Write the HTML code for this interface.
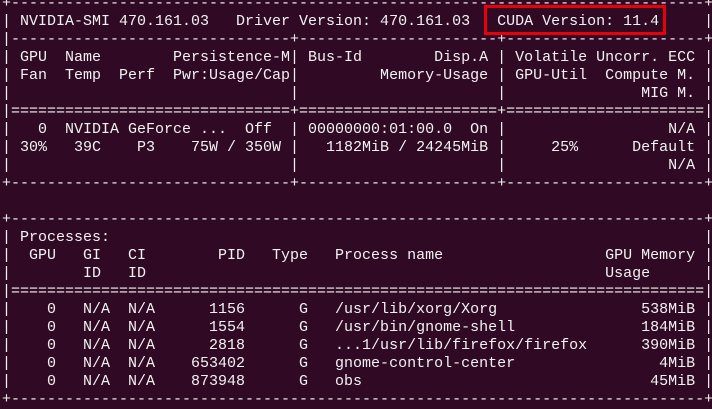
<!DOCTYPE html>
<html><head><meta charset="utf-8"><style>
html,body{margin:0;padding:0;background:#300a24;width:712px;height:404px;overflow:hidden}
pre{position:absolute;left:2px;top:-5px;margin:0;font-family:"Liberation Mono",monospace;font-size:15px;line-height:18px;color:#f2f2f2;white-space:pre}
.box{position:absolute;left:484px;top:5px;width:176px;height:24px;border:3px solid #e8000b}
</style></head><body>
<pre>+-----------------------------------------------------------------------------+
| NVIDIA-SMI 470.161.03   Driver Version: 470.161.03   CUDA Version: 11.4     |
|-------------------------------+----------------------+----------------------+
| GPU  Name        Persistence-M| Bus-Id        Disp.A | Volatile Uncorr. ECC |
| Fan  Temp  Perf  Pwr:Usage/Cap|         Memory-Usage | GPU-Util  Compute M. |
|                               |                      |               MIG M. |
|===============================+======================+======================|
|   0  NVIDIA GeForce ...  Off  | 00000000:01:00.0  On |                  N/A |
| 30%   39C    P3    75W / 350W |   1182MiB / 24245MiB |     25%      Default |
|                               |                      |                  N/A |
+-------------------------------+----------------------+----------------------+
                                                                               
+-----------------------------------------------------------------------------+
| Processes:                                                                  |
|  GPU   GI   CI        PID   Type   Process name                  GPU Memory |
|        ID   ID                                                   Usage      |
|=============================================================================|
|    0   N/A  N/A      1156      G   /usr/lib/xorg/Xorg                538MiB |
|    0   N/A  N/A      1554      G   /usr/bin/gnome-shell              184MiB |
|    0   N/A  N/A      2818      G   ...1/usr/lib/firefox/firefox      390MiB |
|    0   N/A  N/A    653402      G   gnome-control-center                4MiB |
|    0   N/A  N/A    873948      G   obs                                45MiB |
+-----------------------------------------------------------------------------+</pre>
<div class="box"></div>
</body></html>
